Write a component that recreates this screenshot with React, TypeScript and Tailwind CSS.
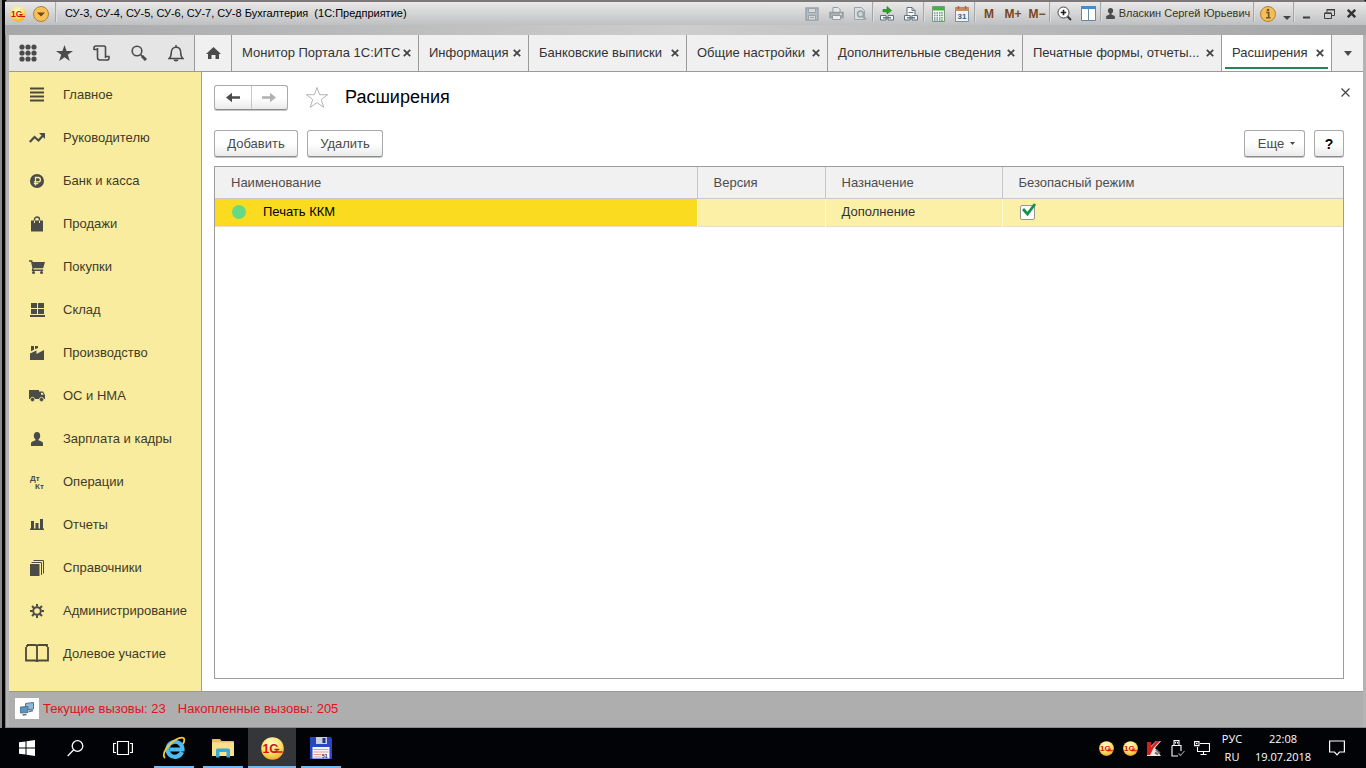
import React from "react";

type IconProps = { className?: string };

function Logo1C({ size, className }: { size: number; className?: string }) {
  return (
    <svg width={size} height={size} viewBox="0 0 24 24" className={className} aria-hidden="true">
      <defs>
        <radialGradient id={`logo${size}`} cx="0.45" cy="0.3" r="0.75">
          <stop offset="0" stopColor="#fffbd0" />
          <stop offset="0.55" stopColor="#fde36a" />
          <stop offset="1" stopColor="#f0a01e" />
        </radialGradient>
      </defs>
      <circle cx="12" cy="12" r="11.8" fill={`url(#logo${size})`} />
      <text x="1.5" y="16.500" fontSize="13" fontWeight="bold" fontFamily="Liberation Sans, sans-serif" fill="#d3130d">1С</text>
      <path d="M13 15.700h9.500M14 13h5" stroke="#d3130d" strokeWidth="1.700" fill="none" />
    </svg>
  );
}

// Title bar icons
const SaveIcon = () => (
  <svg width="14" height="14" viewBox="0 0 14 14" fill="none" stroke="#9aa3a8">
    <path d="M1 1h12v12H1z" fill="#b4bcc0" strokeWidth="1.400" />
    <path d="M3.500 1.500h7v4h-7zM3.500 8.500h7v4.500h-7z" fill="#d6dadc" />
    <path d="M5 10.500h4" />
  </svg>
);

const PrintIcon = ({ className = "text-[#929b9f]" }: IconProps) => (
  <svg width="15" height="15" viewBox="0 0 15 15" fill="none" stroke="currentColor" className={className}>
    <path d="M4 6V1.500h5l2 2V6" fill="#e6e8e9" />
    <path d="M1 6.500h13v5H1z" fill="currentColor" fillOpacity="0.6" strokeWidth="1.400" />
    <path d="M3.500 9.500h8v4h-8z" fill="#eceeee" />
    <path d="M11 8h1.500" stroke="#fff" />
  </svg>
);

const PreviewIcon = () => (
  <svg width="14" height="15" viewBox="0 0 14 15" fill="none" stroke="#9aa3a8">
    <path d="M1.500 1.500h7l3 3v9h-10z" fill="#dcdfe0" />
    <circle cx="7.500" cy="8" r="3" strokeWidth="1.600" fill="#cfd5d8" />
    <path d="M9.800 10.300l3 3.200" strokeWidth="2" />
  </svg>
);

const LinkIcon = () => (
  <svg width="16" height="16" viewBox="0 0 16 16" fill="none">
    <path d="M4 3.500h4V.5L12.500 4.500 8 8V5.800H4z" fill="#27a51f" stroke="#0f7a10" strokeWidth="0.600" />
    <path d="M1.500 9.500h5.500v4.500H1.500zM9 9.500h5.500v4.500H9z" fill="#f4f7f9" stroke="#5f7280" />
    <path d="M4 11.800h8" stroke="#5f7280" strokeWidth="1.400" />
  </svg>
);

const PageLinkIcon = () => (
  <svg width="16" height="16" viewBox="0 0 16 16" fill="none" stroke="#5f7280">
    <path d="M4 9V1.500h5l3 3V9" fill="#fff" />
    <path d="M9 1.500v3h3M5.500 6.500h5" />
    <path d="M1.500 9.500h5.500v4.500H1.500zM9 9.500h5.500v4.500H9z" fill="#f4f7f9" />
    <path d="M4 11.800h8" strokeWidth="1.400" />
  </svg>
);

const CalcIcon = () => (
  <svg width="13" height="16" viewBox="0 0 13 16">
    <path d="M.5.5h12v15H.5z" fill="#f5f7f5" stroke="#7d977d" />
    <path d="M1 1h11v3.500H1z" fill="#3fb34a" />
    <path d="M2 7h6.500M2 9.500h6.500M2 12h6.500M2 14h6.500" stroke="#7b8ea2" strokeWidth="1.300" strokeDasharray="1.500 1" />
    <path d="M10 6v9" stroke="#47ad45" strokeWidth="1.500" strokeDasharray="1.500 1" />
  </svg>
);

const CalendarIcon = () => (
  <svg width="14" height="16" viewBox="0 0 14 16">
    <path d="M.5 1.500h13v14H.5z" fill="#eef3f8" stroke="#7b8fa3" />
    <path d="M0 1.500h14V5H0z" fill="#c98a5c" />
    <path d="M3.500 0v3M10.500 0v3" stroke="#a7683b" strokeWidth="1.500" />
    <text x="7" y="13" fontSize="8" textAnchor="middle" fontFamily="Liberation Sans, sans-serif" fontWeight="bold" fill="#3e5d80">31</text>
  </svg>
);

const ZoomIcon = () => (
  <svg width="15" height="15" viewBox="0 0 15 15" fill="none">
    <circle cx="6.500" cy="6.500" r="5.500" fill="#fff" stroke="#444" />
    <path d="M3.800 6.500h5.400M6.500 3.800v5.400" stroke="#222" strokeWidth="1.700" />
    <path d="M10.500 10.500l3.500 3.500" stroke="#333" strokeWidth="2" />
  </svg>
);

const PanelsIcon = () => (
  <svg width="15" height="15" viewBox="0 0 15 15">
    <path d="M.5.5h14v14H.5z" fill="#fff" stroke="#5d86ad" />
    <path d="M0 0h15v3H0z" fill="#3d8ed6" />
    <path d="M7.500 3v12" stroke="#6b8aa6" />
  </svg>
);

const UserIcon = () => (
  <svg width="9" height="11" viewBox="0 0 9 11" fill="#4c4c4c" className="shrink-0">
    <circle cx="4.500" cy="2.700" r="2.600" />
    <path d="M3.500 4.500h2v2l3.300 1.500v3H.2V8l3.300-1.500z" />
  </svg>
);

const CloseX = ({ className }: IconProps) => (
  <svg width="8" height="8" viewBox="0 0 8 8" stroke="currentColor" strokeWidth="1.800" className={className}>
    <path d="M.8.8l6.400 6.400M7.200.8L.8 7.200" />
  </svg>
);

// Section icons
const sections = [
  {
    name: "Главное",
    icon: (
      <svg width="14" height="15" viewBox="0 0 14 15" stroke="#4d4936" strokeWidth="2">
        <path d="M0 1.500h14M0 5.500h14M0 9.500h14M0 13.500h14" />
      </svg>
    ),
  },
  {
    name: "Руководителю",
    icon: (
      <svg width="16" height="10" viewBox="0 0 16 10" fill="none">
        <path d="M.8 9L5.500 4l4 3.500L14 2.500" stroke="#4b4b48" strokeWidth="2.200" />
        <path d="M10 0h6v6z" fill="#4b4b48" />
      </svg>
    ),
  },
  {
    name: "Банк и касса",
    icon: (
      <svg width="14" height="14" viewBox="0 0 14 14" fill="none">
        <circle cx="7" cy="7" r="7" fill="#4b4b48" />
        <path d="M5.500 11.500V3.500h2.700a2.200 2.200 0 010 4.400H3.800M3.800 9.600h4.500" stroke="#f9eb9e" strokeWidth="1.300" />
      </svg>
    ),
  },
  {
    name: "Продажи",
    icon: (
      <svg width="12" height="16" viewBox="0 0 12 16" fill="none">
        <path d="M0 4.500h12v11H0z" fill="#4b4b48" />
        <path d="M3.500 5V3.500a2.500 2.500 0 015 0V5" stroke="#4b4b48" strokeWidth="1.400" />
        <path d="M3.500 4.500V7M8.500 4.500V7" stroke="#f9eb9e" />
      </svg>
    ),
  },
  {
    name: "Покупки",
    icon: (
      <svg width="16" height="14" viewBox="0 0 16 14" fill="#4b4b48">
        <path d="M0 .3h3.200l.5 1.700H16l-1.800 6.300H4.600l-.2 1.200h9.800V11H2.700l.7-3L2 1.700H0z" />
        <circle cx="4.500" cy="12.400" r="1.500" />
        <circle cx="12.500" cy="12.400" r="1.500" />
      </svg>
    ),
  },
  {
    name: "Склад",
    icon: (
      <svg width="15" height="14" viewBox="0 0 15 14" fill="#4b4b48">
        <path d="M1 0h6v5H1zM8 0h6v5H8zM1 6h6v5H1zM8 6h6v5H8zM0 12h15v2H0z" />
      </svg>
    ),
  },
  {
    name: "Производство",
    icon: (
      <svg width="14" height="14" viewBox="0 0 14 14" fill="#4b4b48">
        <path d="M0 14V7.500l6.500-3V8L14 4v10zM1 0h3v3.800L1 5.300zM5 0h3v2L5 3.300z" />
      </svg>
    ),
  },
  {
    name: "ОС и НМА",
    icon: (
      <svg width="16" height="12" viewBox="0 0 16 12" fill="#4b4b48">
        <path d="M0 0h10v9H0zM10 1.500H14L16 5v4h-6z" />
        <path d="M12 2.700h1.600l1.200 2.100H12z" fill="#f9eb9e" />
        <circle cx="3.500" cy="9.500" r="2.200" stroke="#f9eb9e" strokeWidth="0.800" />
        <circle cx="12.500" cy="9.500" r="2.200" stroke="#f9eb9e" strokeWidth="0.800" />
      </svg>
    ),
  },
  {
    name: "Зарплата и кадры",
    icon: (
      <svg width="12" height="14" viewBox="0 0 12 14" fill="#4b4b48">
        <ellipse cx="6" cy="3.800" rx="3.200" ry="3.800" />
        <path d="M4.500 6h3v2.300L10.500 9.500Q12 10 12 11.500V14H0v-2.500Q0 10 1.500 9.500l3-1.200z" />
      </svg>
    ),
  },
  {
    name: "Операции",
    icon: (
      <svg width="16" height="16" viewBox="0 0 16 16" fill="#4b4b48" fontFamily="Liberation Sans, sans-serif" fontWeight="bold" fontSize="8">
        <text x="1" y="6.500">Дт</text>
        <text x="6" y="15">Кт</text>
      </svg>
    ),
  },
  {
    name: "Отчеты",
    icon: (
      <svg width="14" height="11" viewBox="0 0 14 11" fill="#4b4b48">
        <path d="M1 2h3v8H1zM5.500 4h3v6h-3zM10 0h3v10h-3zM0 9.500h14V11H0z" />
      </svg>
    ),
  },
  {
    name: "Справочники",
    icon: (
      <svg width="14" height="16" viewBox="0 0 14 16">
        <path d="M0 4h9.500v12H0z" fill="#4b4b48" />
        <path d="M1.500 2.500H11.500V15M3.500.500h10V13.500" stroke="#4b4b48" fill="none" />
      </svg>
    ),
  },
  {
    name: "Администрирование",
    icon: (
      <svg width="14" height="14" viewBox="0 0 14 14" fill="none" stroke="#4b4b48">
        <circle cx="7" cy="7" r="3.800" strokeWidth="2" />
        <path d="M7 0v2.500M7 11.500V14M0 7h2.500M11.500 7H14M2 2l2 2M10 10l2 2M12 2l-2 2M4 10l-2 2" strokeWidth="2" />
      </svg>
    ),
  },
  {
    name: "Долевое участие",
    icon: (
      <svg width="24" height="19" viewBox="0 0 24 19" fill="none" stroke="#4d4936" strokeWidth="1.800">
        <path d="M2 1h8q2 0 2 1.500Q12 1 14 1h8v2M12 2.500v13.500M2 1v2M1 3v13.500h9q2 0 2 1.500 0-1.500 2-1.500h9V3" />
      </svg>
    ),
  },
];

const tabs = [
  { name: "Монитор Портала 1С:ИТС", width: "w-[187px]" },
  { name: "Информация", width: "w-[110px]" },
  { name: "Банковские выписки", width: "w-[158px]" },
  { name: "Общие настройки", width: "w-[141px]" },
  { name: "Дополнительные сведения", width: "w-[195px]" },
  { name: "Печатные формы, отчеты...", width: "w-[199px]" },
  { name: "Расширения", width: "w-[110px]", active: true },
];

const iconButton = "flex h-6 w-6 shrink-0 items-center justify-center";
const windowButton = "flex h-6 w-[22px] shrink-0 items-center justify-center text-[#333]";
const formButton =
  "flex h-[27px] items-center justify-center rounded-[3px] border border-[#a9a9a9] border-b-[#8c8c8c] bg-linear-to-b from-white from-50% to-[#ebebeb] text-[#4a4a4a] shadow-[0_1px_0_#c4c4c4]";

function Divider() {
  return <div className="mr-px h-5 w-0.5 shrink-0 self-start border-l border-[#a6a6a6] bg-[#dedede]" />;
}

function TitleBar() {
  return (
    <header className="flex h-[35px] items-start rounded-t-[4px] border-t-2 border-[#7d797b] bg-linear-to-r from-[#a6a7a9] via-[#cdcdcd] to-[#a3a4a6]">
      <div className="flex h-[23px] w-full items-center bg-linear-to-b from-[#e9e9e9] to-[#bfc0c2] pr-1 pl-[5px] text-[11px]">
        <button aria-label="1С:Предприятие"><Logo1C size={16} /></button>
        <button className="mr-1.5 ml-[7px]" aria-label="Главное меню">
          <svg width="16" height="16" viewBox="0 0 16 16">
            <circle cx="8" cy="8" r="7.500" fill="#f9c057" stroke="#ad8138" />
            <path d="M4 6.500h8L8 10.500z" fill="#6b4716" />
          </svg>
        </button>
        <Divider />
        <div className="ml-[7px] min-w-0 flex-1 truncate whitespace-pre text-black">
          {"СУ-3, СУ-4, СУ-5, СУ-6, СУ-7, СУ-8 Бухгалтерия  (1С:Предприятие)"}
        </div>
        <button className={iconButton} aria-label="Сохранить"><SaveIcon /></button>
        <button className={iconButton} aria-label="Печать"><PrintIcon /></button>
        <button className={iconButton} aria-label="Просмотр"><PreviewIcon /></button>
        <Divider />
        <button className={iconButton} aria-label="Перейти по ссылке"><LinkIcon /></button>
        <button className={iconButton} aria-label="Получить ссылку"><PageLinkIcon /></button>
        <Divider />
        <button className={iconButton} aria-label="Калькулятор"><CalcIcon /></button>
        <button className={iconButton} aria-label="Календарь"><CalendarIcon /></button>
        <Divider />
        <div className="flex text-xs font-bold text-[#7b4620]">
          <button className={iconButton}>M</button>
          <button className={iconButton}>M+</button>
          <button className={iconButton}>M−</button>
        </div>
        <Divider />
        <button className={iconButton} aria-label="Масштаб"><ZoomIcon /></button>
        <button className={iconButton} aria-label="Панели"><PanelsIcon /></button>
        <Divider />
        <button className="flex w-[150px] shrink-0 items-center justify-center gap-1 whitespace-nowrap text-[#3b3415]">
          <UserIcon />
          Власкин Сергей Юрьевич
        </button>
        <Divider />
        <button className={iconButton} aria-label="Справка">
          <svg width="16" height="16" viewBox="0 0 16 16">
            <circle cx="8" cy="8" r="7.500" fill="#f6bd55" stroke="#b08335" />
            <path d="M6.200 6.500h2.500v5M6 11.800h4.500" stroke="#6a5632" strokeWidth="1.600" fill="none" />
            <circle cx="8" cy="4" r="1.300" fill="#6a5632" />
          </svg>
        </button>
        <button className="flex h-6 w-[13px] shrink-0 items-end justify-center pb-1.5" aria-label="Ещё">
          <svg width="8" height="4" viewBox="0 0 8 4" fill="#444"><path d="M0 0h8L4 4z" /></svg>
        </button>
        <Divider />
        <button className={windowButton} aria-label="Свернуть">
          <svg width="8" height="10" viewBox="0 0 8 10" fill="#3e3e3e"><path d="M0 7.500h7v2H0z" /></svg>
        </button>
        <button className={windowButton} aria-label="Восстановить">
          <svg width="11" height="10" viewBox="0 0 11 10" fill="none" stroke="#3e3e3e">
            <path d="M3 3V1h7.500v5.500H8M2.500.500h8.500M.500 4.500h7v5h-7zM.500 3.800h7" />
          </svg>
        </button>
        <button className={windowButton} aria-label="Закрыть">
          <svg width="9" height="9" viewBox="0 0 9 9" stroke="currentColor" strokeWidth="2.400"><path d="M.8.8l7.400 7.400M8.200.8L.8 8.200" /></svg>
        </button>
      </div>
    </header>
  );
}

function TabBar() {
  const tool = "flex h-9 w-[37px] items-center justify-center";
  return (
    <div className="flex h-[37px] border-b border-[#9a9a9a] bg-[#f0f0f0] text-[13px] text-[#333]">
      <div className="flex w-[185px] shrink-0 bg-[#e5e5e5]">
        <button className={tool} aria-label="Функции">
          <svg width="18" height="18" viewBox="0 0 18 18" fill="#4b4b4b">
            {[3, 9, 15].map((y) => [3, 9, 15].map((x) => <circle key={`${x}-${y}`} cx={x} cy={y} r="2.600" />))}
          </svg>
        </button>
        <button className={tool} aria-label="Избранное">
          <svg width="17" height="16" viewBox="0 0 17 16" fill="#4b4b4b"><path d="M8.500 0l2.100 6H17l-5.200 3.800 2 6.200-5.300-3.800L3.200 16l2-6.200L0 6h6.400z" /></svg>
        </button>
        <button className={tool} aria-label="История">
          <svg width="17" height="16" viewBox="0 0 17 16" fill="none" stroke="#4b4b4b" strokeWidth="1.600">
            <path d="M4.500 4.500H1V3a2 2 0 012-2h8a1.500 1.500 0 011.500 1.500V11.500M4.500 3v9.500a2.500 2.500 0 002.500 2.500h7.300a1.800 1.800 0 001.700-2v-1.500h-3.500V13" />
          </svg>
        </button>
        <button className={tool} aria-label="Поиск">
          <svg width="16" height="16" viewBox="0 0 16 16" fill="none" stroke="#4b4b4b">
            <circle cx="6" cy="6" r="4.800" strokeWidth="1.600" />
            <path d="M9.500 9.500l2 2" strokeWidth="1.600" />
            <path d="M11 11l4 4" strokeWidth="3" />
          </svg>
        </button>
        <button className={tool} aria-label="Оповещения">
          <svg width="16" height="17" viewBox="0 0 16 17" fill="none" stroke="#4b4b4b" strokeWidth="1.500">
            <path d="M1 13.500c2-1.500 2.300-3 2.300-6C3.300 4 5.500 2.300 8 2.300S12.700 4 12.700 7.500c0 3 .3 4.500 2.300 6z" />
            <path d="M8 0v2.500" />
            <path d="M5.500 14.500a2.500 2 0 005 0z" fill="#4b4b4b" stroke="none" />
          </svg>
        </button>
      </div>
      <button className="flex w-[37px] shrink-0 items-center justify-center border-l border-[#9a9a9a]" aria-label="Начальная страница">
        <svg width="15" height="12" viewBox="0 0 15 12" fill="#4b4b4b"><path d="M7.500 0L15 7h-2v5H9.500V8h-4v4H2V7H0z" /></svg>
      </button>
      {tabs.map((tab) => (
        <div
          key={tab.name}
          className={`relative flex shrink-0 items-center justify-between border-l border-[#9a9a9a] pr-[7px] pl-2.5 ${tab.width} ${tab.active ? "bg-white" : ""}`}
        >
          <a href="#" className="whitespace-nowrap">{tab.name}</a>
          <button className="shrink-0" aria-label={`Закрыть ${tab.name}`}><CloseX className="text-[#444]" /></button>
          {tab.active && <span className="absolute inset-x-[3px] bottom-0.5 h-0.5 bg-[#218653]" />}
        </div>
      ))}
      <button className="flex min-w-8 flex-1 items-center justify-center border-l border-[#9a9a9a]" aria-label="Список окон">
        <svg width="8" height="5" viewBox="0 0 8 5" fill="#4b4b4b"><path d="M0 0h8L4 5z" /></svg>
      </button>
    </div>
  );
}

function Sidebar() {
  return (
    <nav className="w-[193px] shrink-0 border-r border-[#b9a640] bg-[#faec9e]">
      {sections.map((s) => (
        <a key={s.name} href="#" className="flex h-[43px] items-center gap-3.5 pt-0.5 pl-4 text-[13px] text-[#3f3b28]">
          <span className="flex w-6 justify-center">{s.icon}</span>
          {s.name}
        </a>
      ))}
    </nav>
  );
}

function ExtensionsTable() {
  const th = "border-r border-[#c6c6c6] pl-4 text-left font-normal";
  return (
    <div className="flex-1 border border-[#9c9c9c] bg-white">
      <table className="w-full table-fixed border-collapse text-[13px]">
        <thead>
          <tr className="h-[31px] border-b border-[#c9c9c9] bg-[#f1f1f1] text-[#4d4d4d]">
            <th className={`${th} w-[482px]`}>Наименование</th>
            <th className={`${th} w-32`}>Версия</th>
            <th className={`${th} w-[177px]`}>Назначение</th>
            <th className="pl-4 text-left font-normal">Безопасный режим</th>
          </tr>
        </thead>
        <tbody>
          <tr className="h-7 border-b border-[#e4dfc8] bg-[#fcf0a6] text-[#333]">
            <td className="border-r border-[#fff8d0] bg-[#fbdb20] pl-[17px] text-black">
              <div className="flex items-center gap-[17px]">
                <span className="h-3.5 w-3.5 rounded-full bg-[#66d982]" />
                Печать ККМ
              </div>
            </td>
            <td className="border-r border-[#fff8d0]" />
            <td className="border-r border-[#fff8d0] pl-4">Дополнение</td>
            <td className="pl-[17px]">
              <label className="relative block h-[15px] w-[15px]">
                <input type="checkbox" defaultChecked aria-label="Безопасный режим" className="peer block h-[15px] w-[15px] appearance-none rounded-[2px] border border-[#969696] bg-white" />
                <svg width="16" height="15" viewBox="0 0 16 15" fill="none" className="pointer-events-none absolute -top-0.5 left-0.5 hidden peer-checked:block">
                  <path d="M1 6l4.500 5L13 1" stroke="#13904c" strokeWidth="2.800" />
                </svg>
              </label>
            </td>
          </tr>
        </tbody>
      </table>
    </div>
  );
}

function ExtensionsForm() {
  return (
    <main className="flex min-w-0 flex-1 flex-col bg-white pt-3 pr-[19px] pb-3 pl-3 text-[13px]">
      <div className="flex h-[26px] items-center">
        <div className="flex h-[25px] w-[74px] rounded-[3px] border border-[#a9a9a9] border-b-[#8c8c8c] bg-linear-to-b from-white from-50% to-[#ebebeb] shadow-[0_1px_0_#c4c4c4]">
          <button className="flex flex-1 items-center justify-center border-r border-[#c8c8c8] text-[#4b4b4b]" aria-label="Назад">
            <svg width="14" height="11" viewBox="0 0 14 11" fill="currentColor"><path d="M6 .8v3.500h8v2.500H6v3.500L0 5.500z" /></svg>
          </button>
          <button className="flex flex-1 items-center justify-center text-[#b0b0b0]" aria-label="Вперед">
            <svg width="14" height="11" viewBox="0 0 14 11" fill="currentColor"><path d="M8 .8v3.500H0v2.500h8v3.500l6-4.800z" /></svg>
          </button>
        </div>
        <button className="ml-[17px]" aria-label="Добавить в избранное">
          <svg width="24" height="23" viewBox="0 0 24 23" fill="none" stroke="#b4b4b4"><path d="M12 1.500l2.600 7.200h8l-6.300 4.800 2.400 7.800-6.700-4.700-6.700 4.700 2.400-7.800L1.400 8.700h8z" /></svg>
        </button>
        <h1 className="ml-4 flex-1 text-lg text-black">Расширения</h1>
        <button className="-mr-2.5 self-start p-1" aria-label="Закрыть форму">
          <svg width="9" height="9" viewBox="0 0 9 9" stroke="#444" strokeWidth="1.200"><path d="M.5.5l8 8M8.500.5l-8 8" /></svg>
        </button>
      </div>
      <div className="mt-5 mb-[9px] flex">
        <button className={`${formButton} w-[84px]`}>Добавить</button>
        <button className={`${formButton} ml-[9px] w-[76px]`}>Удалить</button>
        <button className={`${formButton} ml-auto w-[61px] gap-1.5 pl-1`}>
          Еще
          <svg width="5" height="3" viewBox="0 0 5 3" fill="#4a4a4a"><path d="M0 0h5L2.500 3z" /></svg>
        </button>
        <button className={`${formButton} ml-[9px] w-[30px]`}><span className="text-sm font-bold text-black">?</span></button>
      </div>
      <ExtensionsTable />
    </main>
  );
}

function StatusBar() {
  return (
    <footer className="flex h-9 items-center border-t border-[#999] bg-[#aeaeae] pb-0.5 pl-1.5 text-[13px] text-[#e0141a]">
      <button className="flex h-[21px] w-6 items-center justify-center bg-white" aria-label="Показатели производительности">
        <svg width="15" height="14" viewBox="0 0 15 14" stroke="#55748c">
          <path d="M5.500 1.500l8-1v6.500l-8 1z" fill="#8fb9d6" />
          <path d="M9 9.500l4-1" strokeWidth="1.500" />
          <path d="M.5 5l7.500-.500v6L.5 11z" fill="#5596c4" />
          <path d="M2.500 13l4-.500" strokeWidth="1.500" />
        </svg>
      </button>
      <span className="ml-1">Текущие вызовы: 23</span>
      <span className="ml-3">Накопленные вызовы: 205</span>
    </footer>
  );
}

function Taskbar() {
  const cell = "flex h-10 w-12 shrink-0 items-center justify-center";
  const running = "relative mr-px flex h-10 w-12 shrink-0 items-center justify-center";
  const line = "absolute inset-x-1 bottom-0 h-0.5 bg-[#76b9ed]";
  const tray = "flex h-10 w-6 shrink-0 items-center justify-center";
  return (
    <div className="flex h-10 bg-[#020307] pr-2 pl-[3px] font-['Open_Sans','Noto_Sans',sans-serif] text-[11px] text-white">
      <button className={cell} aria-label="Пуск">
        <svg width="16" height="16" viewBox="0 0 16 16" fill="#fff"><path d="M0 2.300l6.500-.9v6.100H0zM7.500 1.200L16 0v7.500H7.500zM0 8.500h6.500v6.100L0 13.700zM7.500 8.500H16V16l-8.500-1.200z" /></svg>
      </button>
      <button className={cell} aria-label="Поиск">
        <svg width="17" height="17" viewBox="0 0 17 17" fill="none" stroke="#fff" strokeWidth="1.300"><circle cx="10.500" cy="6" r="5.300" /><path d="M6.700 9.800L.7 16" /></svg>
      </button>
      <button className={cell} aria-label="Представление задач">
        <svg width="20" height="14" viewBox="0 0 20 14" fill="none" stroke="#fff" strokeWidth="1.200"><path d="M4.500.500h11v13h-11zM3 2.500H.6v9H3M17 2.500h2.400v9H17" /></svg>
      </button>
      <div className="w-[3px] shrink-0" />
      <button className={running} aria-label="Internet Explorer">
        <svg width="24" height="24" viewBox="0 0 24 24" fill="none">
          <path d="M20 16a7.500 7.500 0 11.500-2.500H8" stroke="#4bbcf0" strokeWidth="4.200" />
          <path d="M3 22C-1 18 6 8 14 3.500c4.500-2.500 8-2.500 8.300 0 .2 1.500-.5 3-1.300 4.500" stroke="#f5c83a" strokeWidth="1.800" />
        </svg>
        <span className={line} />
      </button>
      <button className={running} aria-label="Проводник">
        <svg width="22" height="20" viewBox="0 0 22 20">
          <path d="M0 1.500Q0 1 .5 1H8l1.500 2H21q1 0 1 1v14H0z" fill="#e8c15a" />
          <path d="M0 4.500h22V18H0z" fill="#fbe08c" />
          <path d="M4 19.500V12q0-1.500 1.500-1.500h11Q18 10.500 18 12v7.500h-3.500V14h-7v5.500z" fill="#36a9dc" />
        </svg>
        <span className={line} />
      </button>
      <button className={`${running} bg-[#35363a]`} aria-label="1С:Предприятие">
        <Logo1C size={23} />
        <span className="absolute inset-x-0 bottom-0 h-0.5 bg-[#76b9ed]" />
      </button>
      <button className={running} aria-label="Total Commander">
        <svg width="24" height="24" viewBox="0 0 24 24">
          <path d="M1 1h20.500L23 2.500V23H1z" fill="#2845c4" />
          <path d="M7 1h11v7H7z" fill="#c9d0dc" />
          <path d="M13.500 2h3v5h-3z" fill="#1c2f93" />
          <path d="M3.500 11h17v11.500h-17z" fill="#fbf4f4" />
          <path d="M4.500 13.500h15M4.500 16h15M4.500 18.500h8M4.500 21h8" stroke="#e39a9a" />
          <text x="13" y="22" fontSize="5" fontWeight="bold" fontFamily="Liberation Sans, sans-serif" fill="#222">51</text>
        </svg>
        <span className={line} />
      </button>
      <div className="ml-auto flex items-center">
        <button className={tray} aria-label="1С"><Logo1C size={15} /></button>
        <button className={tray} aria-label="1С"><Logo1C size={15} /></button>
        <button className={tray} aria-label="Kaspersky">
          <svg width="15" height="15" viewBox="0 0 15 15" fill="none">
            <path d="M0 1h4v4l5-5h5L8 7l6 8H0z" fill="#f1e6e6" />
            <path d="M0 1h4v5l5.500-6H13L6.500 7 3 14H0z" fill="#d2201e" />
            <path d="M9 8.500l4 4M8 11.500l3 2" stroke="#666" strokeWidth="1.800" />
          </svg>
        </button>
        <button className={tray} aria-label="Извлечение устройства">
          <svg width="14" height="17" viewBox="0 0 14 17" fill="none" stroke="#fff" strokeWidth="1.100"><path d="M3 5.500V.600h5v4.900M1 5.500h9V11M1 5.500v10.500h6M4.500 2v1.500M6.500 2v1.500" /><path d="M7.500 13.500l2 2L13.500 11" stroke="#9a9a9a" /></svg>
        </button>
        <button className={tray} aria-label="Сеть">
          <svg width="16" height="14" viewBox="0 0 16 14" fill="none" stroke="#fff" strokeWidth="1.100"><path d="M6 2.500h9.500v8H3.500V6M9.500 10.500v3M6.500 13.500h6M.600.600H5v4H.600zM2 2.600h1.500" /></svg>
        </button>
        <button className="w-9 text-center leading-[18px]">РУС<br />RU</button>
        <button className="w-[66px] text-center leading-[18px]">22:08<br />19.07.2018</button>
        <button className="flex h-10 w-[42px] items-center justify-center" aria-label="Уведомления">
          <svg width="16" height="16" viewBox="0 0 16 16" fill="none" stroke="#fff" strokeWidth="1.200"><path d="M.6 1h14.800v11H10.500L8 14.800 5.500 12H.6z" /></svg>
        </button>
      </div>
    </div>
  );
}

export default function App() {
  return (
    <div className="flex min-h-screen flex-col bg-[#050505] font-['Liberation_Sans',Arial,sans-serif]">
      <div className="flex flex-1 flex-col border-l-2 border-[#8a8a8a] pl-[3px]">
        <div className="flex flex-1 flex-col rounded-t-[4px] border-b border-[#8a8a8a] bg-[#b4b4b4]">
          <TitleBar />
          <div className="flex flex-1 flex-col border-l border-[#808080] pr-[3px] pl-[3px]">
            <TabBar />
            <div className="flex flex-1">
              <Sidebar />
              <ExtensionsForm />
            </div>
            <StatusBar />
          </div>
        </div>
      </div>
      <Taskbar />
    </div>
  );
}
